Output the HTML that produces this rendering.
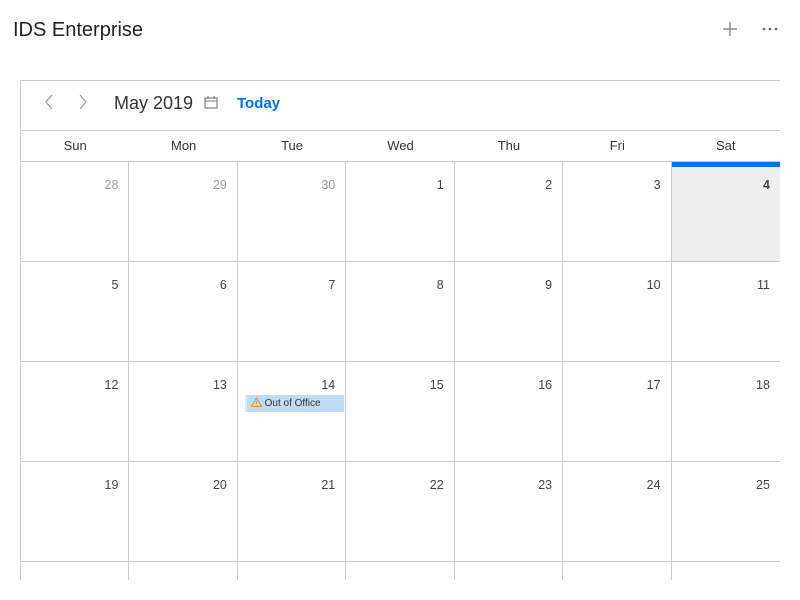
<!DOCTYPE html>
<html><head><style>
*{box-sizing:border-box;margin:0;padding:0}
html,body{width:800px;height:600px;overflow:hidden}
body{background:#fff;font-family:"Liberation Sans",sans-serif;color:#333;position:relative}
.title{position:absolute;left:13px;top:19px;font-size:20px;color:#222}
.cal{position:absolute;left:20px;top:80px;width:760px;height:500px;border-left:1px solid #ccc;border-top:1px solid #ccc;overflow:hidden}
.hdr{height:50px;border-bottom:1px solid #ccc;position:relative}
.days{height:31px;border-bottom:1px solid #ccc;display:flex}
.days div{width:108.43px;text-align:center;font-size:13px;line-height:30px;color:#333}
.grid{position:absolute;top:81px;left:0;width:760px}
.row{display:flex;height:100px;border-bottom:1px solid #ccc}
.c{width:108.43px;border-right:1px solid #ccc;position:relative;font-size:12.5px;text-align:right;padding:16px 10px 0 0;color:#444}
.c:last-child{border-right:none}
.c.o{color:#999}
.c.t{background:#eee;font-weight:bold;border-top:5px solid #0072ed;padding-top:11px}
</style></head><body>
<div class="title">IDS Enterprise</div>
<svg style="position:absolute;left:722px;top:21px" width="16" height="16"><path d="M8 1v14M1 8h14" stroke="#777" stroke-width="1.2"/></svg>
<svg style="position:absolute;left:762px;top:26px" width="18" height="6"><circle cx="2" cy="3" r="1.3" fill="#666"/><circle cx="8" cy="3" r="1.3" fill="#666"/><circle cx="14" cy="3" r="1.3" fill="#666"/></svg>
<div class="cal">
<div class="hdr">
<svg style="position:absolute;left:22px;top:13px" width="12" height="16"><path d="M9 1L3 8l6 7" fill="none" stroke="#999" stroke-width="1.2"/></svg>
<svg style="position:absolute;left:56px;top:13px" width="12" height="16"><path d="M3 1l6 7-6 7" fill="none" stroke="#999" stroke-width="1.2"/></svg>
<div style="position:absolute;left:93px;top:12px;font-size:18px;color:#333">May 2019</div>
<svg style="position:absolute;left:183px;top:15px" width="14" height="13"><rect x="1" y="2" width="12" height="10" fill="none" stroke="#777" stroke-width="1.1"/><path d="M1 5h12M4 0v3M10 0v3" stroke="#777" stroke-width="1.1"/></svg>
<div style="position:absolute;left:216px;top:14px;font-size:15px;font-weight:bold;color:#0072ed">Today</div>
</div>
<div class="days"><div>Sun</div><div>Mon</div><div>Tue</div><div>Wed</div><div>Thu</div><div>Fri</div><div>Sat</div></div>
<div class="grid">
<div class="row"><div class="c o">28</div><div class="c o">29</div><div class="c o">30</div><div class="c">1</div><div class="c">2</div><div class="c">3</div><div class="c t">4</div></div>
<div class="row"><div class="c">5</div><div class="c">6</div><div class="c">7</div><div class="c">8</div><div class="c">9</div><div class="c">10</div><div class="c">11</div></div>
<div class="row"><div class="c">12</div><div class="c">13</div><div class="c">14
<div style="position:absolute;left:7px;top:33px;width:99px;height:17px;background:#bfdcf7;border-left:2px solid #d6ebfb;text-align:left;font-size:10px;line-height:17px;color:#333;padding-left:4px"><svg width="11" height="10" style="vertical-align:-1px"><path d="M5.5 1L10.5 9.5H.5z" fill="none" stroke="#e8912d" stroke-width="1"/><path d="M5.5 4v3M5.5 8v.6" stroke="#e8912d"/></svg> Out of Office</div></div><div class="c">15</div><div class="c">16</div><div class="c">17</div><div class="c">18</div></div>
<div class="row"><div class="c">19</div><div class="c">20</div><div class="c">21</div><div class="c">22</div><div class="c">23</div><div class="c">24</div><div class="c">25</div></div>
<div class="row"><div class="c"></div><div class="c">27</div><div class="c"></div><div class="c"></div><div class="c"></div><div class="c"></div><div class="c"></div></div>
</div></div>
</body></html>
